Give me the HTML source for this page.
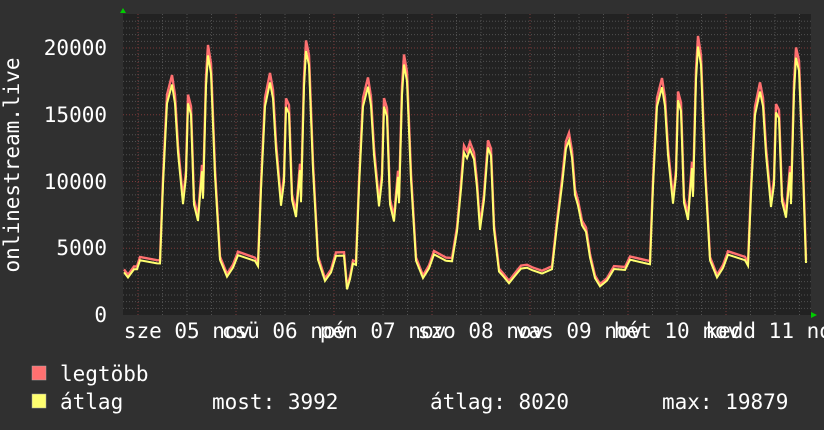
<!DOCTYPE html>
<html><head><meta charset="utf-8"><style>
html,body{margin:0;padding:0;background:#303030;}
body{width:824px;height:430px;position:relative;overflow:hidden;font-family:"DejaVu Sans Mono","Liberation Mono",monospace;color:#fff;font-size:21px;}
.t{position:absolute;white-space:pre;line-height:20px;}
.yl{position:absolute;right:717px;text-align:right;line-height:20px;}
</style></head><body>
<svg id="g" width="824" height="430" style="position:absolute;left:0;top:0">
<rect x="123" y="14" width="688" height="301" fill="#222"/>
<g id="grid"></g>
<polyline id="mx" fill="none" stroke="#ff7070" stroke-width="2.4"/>
<polyline id="av" fill="none" stroke="#ffff70" stroke-width="2"/>
<polygon points="120,13 126,13 123,8" fill="#0c0"/>
<polygon points="811,312 811,318 817,315" fill="#0c0"/>
<rect x="32" y="366" width="14" height="14" fill="#ff7070" stroke="#aaa" stroke-width="0.5"/>
<rect x="32" y="394" width="14" height="14" fill="#ffff70" stroke="#aaa" stroke-width="0.5"/>
</svg>
<div class="yl" style="top:38px">20000</div>
<div class="yl" style="top:105px">15000</div>
<div class="yl" style="top:172px">10000</div>
<div class="yl" style="top:238px">5000</div>
<div class="yl" style="top:305px">0</div>
<div class="t" style="left:-98px;top:155px;width:220px;text-align:center;transform:rotate(-90deg)">onlinestream.live</div>
<div id="xl"></div>
<div class="t" style="left:60px;top:364px">legtöbb</div>
<div class="t" style="left:60px;top:392px">átlag</div>
<div class="t" style="left:212px;top:392px">most: 3992</div>
<div class="t" style="left:430px;top:392px">átlag: 8020</div>
<div class="t" style="left:662px;top:392px">max: 19879</div>
<script>
var Y=function(v){return 315-v*13.35;};
var g='';
for(var v=0.5;v<=22;v+=0.5){var y=Y(v);if(y<14)break;var maj=(Math.abs(v%5)<0.01);
g+='<line x1="123" x2="811" y1="'+y+'" y2="'+y+'" stroke="'+(maj?'#7a3a3a':'#505050')+'" stroke-dasharray="1,2" stroke-width="1"/>';}
for(var x=138-24.5*5;x<811;x+=24.5){if(x<124)continue;var maj=Math.abs(((x-138)/98)-Math.round((x-138)/98))<0.01;
g+='<line y1="14" y2="315" x1="'+x+'" x2="'+x+'" stroke="'+(maj?'#7a3a3a':'#505050')+'" stroke-dasharray="1,2" stroke-width="1"/>';}
document.getElementById('grid').innerHTML=g;
var wk=[[140,4.3],[157,4.1],[160,3.9],[163,9.6],[167,15.6],[172,17.2],[175,16.0],[178,12.4],[183,8.4],[186,10.2],[188,15.6],[191,14.9],[194,8.4],[198,7.3],[202,10.9],[203,8.6],[206,16.9],[208,19.3],[211,18.2],[215,10.7],[220,4.3],[227,2.8],[233,3.3]];
var sat=[[140,4.3],[152,4.0],[158,4.2],[163,6.5],[167,9.5],[170,12.0],[173,11.5],[176,12.3],[180,11.8],[183,9.8],[186,6.5],[190,8.5],[194,12.3],[197,11.8],[200,6.5],[205,3.5],[210,3.0],[215,2.3],[220,2.6],[227,3.3],[233,3.6]];
var sun=[[140,3.6],[150,3.3],[160,3.4],[165,6.5],[170,9.5],[174,12.5],[177,13.3],[180,12.0],[183,9.0],[186,8.0],[190,6.5],[194,6.2],[198,4.5],[203,3.0],[208,2.2],[215,2.4],[222,3.2],[233,3.3]];
var days=[[wk,1,1,1],[wk,1,1,1.02],[wk,0.98,0.98,0.95],[sat],[sun],[wk,0.98,1.02,1.04],[wk,0.95,0.97,0.99]];
var pts=[[124,3.2],[128,2.6],[134,3.2],[137,3.4]];
days.forEach(function(d,k){d[0].forEach(function(p){var v=p[1];if(d.length>1){var s=p[0]<182?d[1]:(p[0]<200?d[2]:d[3]);if(v>5)v=4+(v-4)*s;}pts.push([p[0]+98*k,v]);});});
pts=pts.filter(function(p){return p[0]<806});
pts.push([806,4.0]);
// day2 dip near x=347
pts.push([344,4.2],[347,1.8],[350,2.8]);
pts.sort(function(a,b){return a[0]-b[0];});
var a=[],m=[];
pts.forEach(function(p,i){var j=Math.sin(i*7.3)*0.25;a.push(p[0]+','+Y(p[1]+j).toFixed(1));m.push(p[0]+','+Y((p[1]+j)*1.035+0.1).toFixed(1));});
document.getElementById('av').setAttribute('points',a.join(' '));
document.getElementById('mx').setAttribute('points',m.join(' '));
var labs=['sze 05 nov','csü 06 nov','pén 07 nov','szo 08 nov','vas 09 nov','hét 10 nov','kedd 11 nov'];
var h='';labs.forEach(function(l,k){var c=187+98*k;var w=l.length*12.64;h+='<div class="t" style="left:'+(c-w/2)+'px;top:321px">'+l+'</div>';});
document.getElementById('xl').innerHTML=h;
</script>
</body></html>
